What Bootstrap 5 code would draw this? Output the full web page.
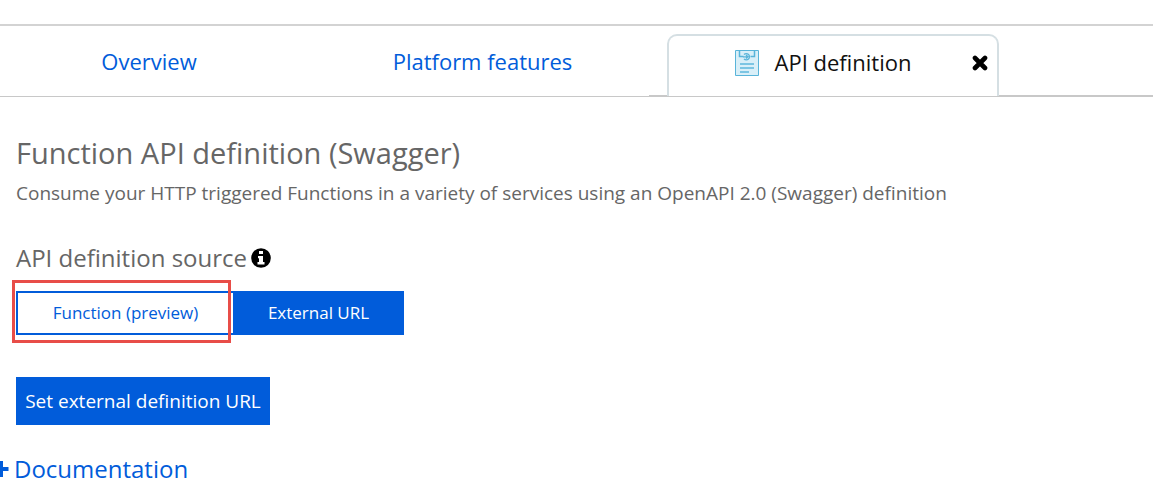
<!DOCTYPE html>
<html lang="en">
<head>
<meta charset="utf-8">
<meta name="viewport" content="width=device-width, initial-scale=1">
<title>API definition</title>
<link href="https://cdn.jsdelivr.net/npm/bootstrap@5.3.0/dist/css/bootstrap.min.css" rel="stylesheet">
<style>
  body { font-family: "Segoe UI", "Open Sans", sans-serif; color: #666; background: #fff; }
  a { color: #015cda; text-decoration: none; }
  .topbar { height: 26px; border-bottom: 2px solid #d3d3d3; }
  .tabstrip { display: grid; grid-template-columns: 298fr 369fr 332fr 154fr; height: 71px; padding-top: 8px; border-bottom: 1px solid #c8c8c8; font-size: 22px; line-height: 32px; }
  .tab-link { padding-top: 11px; text-align: center; }
  .before-active { position: relative; }
  .before-active::after { content: ""; position: absolute; right: 0; bottom: 0; width: 18px; border-bottom: 1px solid #c8c8c8; }
  .after-active { border-bottom: 1px solid #c8c8c8; }
  .active-tab { border: 2px solid #d5dfe3; border-bottom: 0; border-radius: 10px 10px 0 0; color: #111; position: relative; padding: 10px 20px 0 0; }
  .tab-close { position: absolute; right: 8px; top: 18px; width: 18px; height: 18px; padding: 0; border: 0; background: none; }
  .page-title { font-size: 29px; line-height: 36px; margin-top: 38px; }
  .intro { font-size: 19px; line-height: 28px; margin-bottom: 35px; }
  .source-title { font-size: 24px; line-height: 32px; margin-bottom: 17px; }
  .blue-btn { --bs-btn-color: #fff; --bs-btn-bg: #015cda; --bs-btn-border-color: #015cda; --bs-btn-hover-color: #fff; --bs-btn-hover-bg: #014fba; --bs-btn-border-radius: 0; --bs-btn-border-width: 2px; --bs-btn-padding-y: 0; --bs-btn-padding-x: 0; }
  .choice { height: 44px; --bs-btn-font-size: 17px; }
  .choice-open { width: 217px; border-right: 0; --bs-btn-color: #015cda; --bs-btn-bg: #fff; }
  .choice-set { width: 171px; }
  .marked { position: relative; }
  .marked::after { content: ""; position: absolute; top: -11px; left: -4px; width: 219px; height: 63px; border: 3px solid #e84d48; pointer-events: none; }
  .set-url { width: 254px; height: 48px; margin-top: 42px; --bs-btn-font-size: 19px; }
  .docs { font-size: 24px; line-height: 32px; gap: 5px; margin-top: 28px; }
</style>
</head>
<body>
<header class="topbar"></header>
<nav class="tabstrip" aria-label="Function app">
  <a href="#" class="tab-link">Overview</a>
  <a href="#" class="tab-link before-active">Platform features</a>
  <div class="active-tab d-flex justify-content-center align-items-start">
    <svg class="me-3 mt-1" width="24" height="26" viewBox="0 0 24 26" fill="none" aria-hidden="true">
      <path d="M.5.5h23v25H.5z" fill="#d9eff8" stroke="#59b4d9"/>
      <path d="M4.500 1v5.500h4M19.500 1v5.500h-4" stroke="#59b4d9" stroke-width="1.500"/>
      <path d="M9 4.500a3.200 3.200 0 1 1 0 4.500M8 6.800h4.500M11 5l2 1.800-2 1.800" stroke="#59b4d9" stroke-width="1.300"/>
      <path d="M5 14h14M5 18h14M5 22h9" stroke="#7cc5e3" stroke-width="2"/>
    </svg>
    <span>API definition</span>
    <button type="button" class="tab-close d-flex align-items-center justify-content-center" aria-label="Close tab">
      <svg width="16" height="16" viewBox="0 0 16 16" aria-hidden="true"><path d="M3 3l10 10M13 3L3 13" stroke="#000" stroke-width="4.600" stroke-linecap="round"/></svg>
    </button>
  </div>
  <div class="after-active"></div>
</nav>
<main class="px-3">
  <h1 class="page-title fw-normal mb-2">Function API definition (Swagger)</h1>
  <p class="intro">Consume your HTTP triggered Functions in a variety of services using an OpenAPI 2.0 (Swagger) definition</p>
  <h2 class="source-title fw-normal d-flex align-items-center">API definition source
    <svg class="ms-1" width="20" height="20" viewBox="0 0 20 20" aria-hidden="true"><circle cx="10" cy="10" r="9.800" fill="#000"/><path d="M8 3h4v3H8zM7 8h5v6h1.500v2.500h-7V14H8v-3.700H7z" fill="#fff"/></svg>
  </h2>
  <div class="d-flex" role="group" aria-label="API definition source">
    <div class="marked d-flex"><button type="button" class="btn blue-btn choice choice-open">Function (preview)</button></div>
    <button type="button" class="btn blue-btn choice choice-set">External URL</button>
  </div>
  <button type="button" class="btn blue-btn set-url">Set external definition URL</button>
</main>
<a href="#" class="docs d-inline-flex align-items-center">
  <svg width="9" height="16" viewBox="0 0 9 16" aria-hidden="true"><path d="M0 0h3v6h5.500v4H3v6H0z" fill="#015cda"/></svg>
  Documentation
</a>
<script src="https://cdn.jsdelivr.net/npm/bootstrap@5.3.0/dist/js/bootstrap.bundle.min.js"></script>
</body>
</html>
